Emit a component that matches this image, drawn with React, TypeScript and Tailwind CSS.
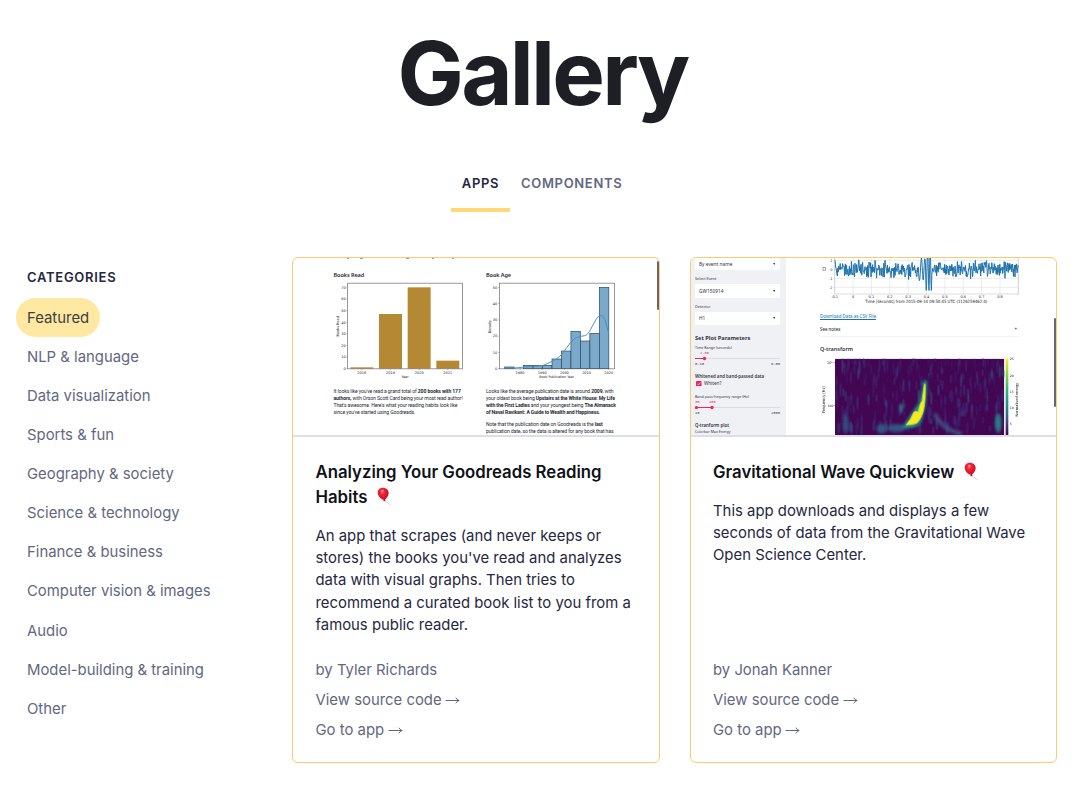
import type { ReactNode } from "react";

const categories = [
  "NLP & language",
  "Data visualization",
  "Sports & fun",
  "Geography & society",
  "Science & technology",
  "Finance & business",
  "Computer vision & images",
  "Audio",
  "Model-building & training",
  "Other",
];

function makeRandom(seed: number) {
  let s = seed;
  return () => {
    s = (s * 16807) % 2147483647;
    return s / 2147483647;
  };
}

function Balloon() {
  return (
    <svg viewBox="0 0 42 54" className="ml-[9.5px] inline-block h-[18px] w-[14px] align-[-2.5px]">
      <defs>
        <radialGradient id="balloon" cx="0.42" cy="0.3" r="0.7">
          <stop offset="0" stopColor="#ff6a70" />
          <stop offset="0.3" stopColor="#ee2436" />
          <stop offset="1" stopColor="#c40a20" />
        </radialGradient>
      </defs>
      <path d="M23 41 C25 47 31 43 33 48 S38 51 41 52" fill="none" stroke="#bdbdbd" strokeWidth="1.8" />
      <path d="M18 2 C28 2 35 9 35 18 C35 28 28 34 24 38 L26 42 L19 43 L20 38 C12 36 3 28 2 17 C2 8 9 2 18 2Z" fill="url(#balloon)" />
      <ellipse cx="16" cy="11" rx="4" ry="3" fill="#ff9a9e" opacity="0.8" />
    </svg>
  );
}

function BooksChart() {
  const bars = [
    [194, 352, "2018"],
    [280, 192, "2019"],
    [366, 112, "2020"],
    [452, 332, "2021"],
  ] as const;
  return (
    <svg viewBox="145 96 390 291" className="block h-[97px] w-[130px]" fontFamily="DejaVu Sans" fontSize="10.500" fill="#222">
      {bars.map(([x, y, label]) => (
        <g key={label}>
          <rect x={x} y={y} width="69" height={356 - y} fill="#b58934" />
          <path d={`M${x + 34.5} 356v4`} stroke="#444" />
          <text x={x + 34.5} y="371" textAnchor="middle">{label}</text>
        </g>
      ))}
      {[0, 10, 20, 30, 40, 50, 60, 70].map((v) => (
        <g key={v}>
          <path d={`M182 ${356 - v * 3.486}h4`} stroke="#444" />
          <text x="180" y={360 - v * 3.486} textAnchor="end">{v}</text>
        </g>
      ))}
      <rect x="186" y="99.500" width="344" height="257" fill="none" stroke="#666" strokeWidth="2" />
      <text x="358" y="385" textAnchor="middle">Year</text>
      <text transform="translate(160 229) rotate(-90)" textAnchor="middle">Books Read</text>
    </svg>
  );
}

function AgeChart() {
  const tops = [351, 356, 346, 346, 346, 327, 303, 244, 273, 250, 112];
  return (
    <svg viewBox="48 96 390 291" className="block h-[97px] w-[130px]" fontFamily="DejaVu Sans" fontSize="10.500" fill="#222">
      {tops.map((y, i) => (
        <rect key={i} x={104 + i * 28.4} y={y} width="28.400" height={356 - y} fill="#7aa9cb" stroke="#24465c" strokeWidth="2" />
      ))}
      <path d="M104 355 C150 355 165 349 189 349 S220 347 240 337 S268 323 285 300 S310 264 328 260 S350 260 362 238 S380 200 391 197 S407 213 416 250" fill="none" stroke="#4b8fbe" strokeWidth="3" />
      {[0, 10, 20, 30, 40, 50].map((v) => (
        <g key={v}>
          <path d={`M84 ${356 - v * 4.88}h4`} stroke="#444" />
          <text x="82" y={360 - v * 4.88} textAnchor="end">{v}</text>
        </g>
      ))}
      {[1980, 1990, 2000, 2010, 2020].map((v, i) => (
        <g key={v}>
          <path d={`M${150 + i * 66.6} 356v4`} stroke="#444" />
          <text x={150 + i * 66.6} y="371" textAnchor="middle">{v}</text>
        </g>
      ))}
      <rect x="88" y="99.500" width="345" height="257" fill="none" stroke="#666" strokeWidth="2" />
      <text x="260" y="385" textAnchor="middle" textLength="104" lengthAdjust="spacingAndGlyphs">Book Publication Year</text>
      <text transform="translate(64 230) rotate(-90)" textAnchor="middle">Density</text>
    </svg>
  );
}

function wavePath() {
  const rnd = makeRandom(77);
  let d = "";
  for (let x = 105; x <= 655; x += 1.2) {
    let y = 58 + (rnd() + rnd() - 1) * 31;
    if (x > 355 && x < 396) {
      const a = x < 375 ? 34 : 64;
      y = 58 + Math.sin((x - 355) * (0.45 + (x - 355) * 0.006)) * a;
    }
    d += `${d ? "L" : "M"}${x.toFixed(1)} ${y.toFixed(1)}`;
  }
  return d;
}

function WaveChart() {
  return (
    <svg viewBox="60 24 600 141" className="block h-[47px] w-[200px]" fontFamily="DejaVu Sans" fill="#222">
      {[0, 1, 2, 3, 4, 5, 6, 7, 8, 9, 10].map((i) => (
        <path key={i} d={`M${104 + i * 55.1} 24V137`} stroke="#d8d8d8" strokeWidth="1.500" />
      ))}
      {[31, 58, 85, 112].map((y, i) => (
        <g key={y}>
          <path d={`M100 ${y}H655`} stroke="#d8d8d8" strokeWidth="1.500" />
          <text x="97" y={y + 4} fontSize="10" textAnchor="end">{1 - i}</text>
        </g>
      ))}
      <path d="M104 24V132H655V24" fill="none" stroke="#bbb" strokeWidth="1.500" />
      <path d={wavePath()} fill="none" stroke="#1b70aa" strokeWidth="2.900" strokeLinejoin="round" />
      {["-0.1", "0", "0.1", "0.2", "0.3", "0.4", "0.5", "0.6", "0.7", "0.8"].map((t, i) => (
        <text key={t} x={104 + i * 55.1} y="145" fontSize="10.500" textAnchor="middle">{t}</text>
      ))}
      <rect x="69" y="53" width="8" height="8" fill="none" stroke="#555" strokeWidth="1.500" />
      <text x="379" y="160" fontSize="13" textAnchor="middle" textLength="366" lengthAdjust="spacingAndGlyphs">Time [seconds] from 2015-09-14 09:50:45 UTC (1126259462.0)</text>
    </svg>
  );
}

function Spectrogram() {
  const rnd = makeRandom(4213);
  const streaks = Array.from({ length: 260 }, () => {
    const y = 325 + Math.pow(rnd(), 1.2) * 215;
    const low = (y - 325) / 215;
    return {
      x: 105 + rnd() * 508,
      y,
      rx: 1.5 + low * 2.5 + rnd() * 1.2,
      ry: 9 + rnd() * 14,
      o: 0.14 + rnd() * 0.34,
      c: rnd() > 0.3 ? "#3f3f85" : "#31688e",
    };
  });
  return (
    <svg viewBox="60 320 600 236" className="block h-[78.67px] w-[200px]" fontFamily="DejaVu Sans" fill="#222">
      <defs>
        <clipPath id="plot"><rect x="105" y="325" width="508" height="231" /></clipPath>
        <filter id="soft"><feGaussianBlur stdDeviation="1.4" /></filter>
        <filter id="softer" x="-50%" y="-50%" width="200%" height="200%"><feGaussianBlur stdDeviation="5" /></filter>
        <linearGradient id="viridis" x1="0" y1="0" x2="0" y2="1">
          <stop offset="0" stopColor="#fde725" />
          <stop offset="0.2" stopColor="#8fd744" />
          <stop offset="0.4" stopColor="#35b779" />
          <stop offset="0.6" stopColor="#21908d" />
          <stop offset="0.8" stopColor="#3b528b" />
          <stop offset="1" stopColor="#440154" />
        </linearGradient>
      </defs>
      <g clipPath="url(#plot)">
        <rect x="105" y="325" width="508" height="231" fill="#430653" />
        <g filter="url(#soft)">
          {streaks.map((s, i) => (
            <ellipse key={i} cx={s.x} cy={s.y} rx={s.rx} ry={s.ry} fill={s.c} opacity={s.o} />
          ))}
        </g>
        <g filter="url(#softer)">
          <ellipse cx="137" cy="520" rx="9" ry="30" fill="#31688e" opacity="0.7" />
          <ellipse cx="595" cy="518" rx="9" ry="30" fill="#21908d" opacity="0.9" />
          <ellipse cx="245" cy="535" rx="16" ry="14" fill="#31688e" opacity="0.8" />
          <ellipse cx="290" cy="533" rx="28" ry="12" fill="#31688e" opacity="0.8" />
          <path d="M404 490 Q428 540 485 550" fill="none" stroke="#3b6a92" strokeWidth="13" opacity="0.7" />
          <ellipse cx="303" cy="473" rx="5" ry="14" fill="#31888e" opacity="0.8" />
          <path d="M312 530 Q338 490 358 462 Q368 440 372 395 L378 395 Q376 480 358 518 Q338 532 312 530Z" fill="#29af7f" stroke="#21908d" strokeWidth="7" />
        </g>
        <g filter="url(#soft)">
          <path d="M318 524 Q334 506 341 486 Q347 480 355 485 Q360 456 366 453 Q370 420 373 400 L376 403 Q377 450 371 480 Q364 506 350 519 Q334 525 318 524Z" fill="#fbe723" stroke="#9bd93c" strokeWidth="2.500" />
        </g>
      </g>
      <rect x="617" y="325" width="8" height="231" fill="url(#viridis)" />
      {[25, 20, 15, 10, 5].map((v, i) => (
        <text key={v} x="629" y={330 + i * 48.8} fontSize="9.500">{v}</text>
      ))}
      <path d="M101 337h4M101 465h4" stroke="#444" strokeWidth="1.500" />
      <text x="98" y="341" fontSize="10" textAnchor="end">10³</text>
      <text x="100" y="469" fontSize="9" textAnchor="end">100</text>
      <text transform="translate(76 448) rotate(-90)" fontSize="12" textAnchor="middle" textLength="80" lengthAdjust="spacingAndGlyphs">Frequency [Hz]</text>
      <text transform="translate(653 448) rotate(-90)" fontSize="11" textAnchor="middle" textLength="101" lengthAdjust="spacingAndGlyphs">Normalised energy</text>
    </svg>
  );
}

function GoodreadsPreview() {
  return (
    <div className="relative flex h-[177px] overflow-hidden pl-[40.500px] font-['Noto_Sans',sans-serif] text-[#262833]">
      <div className="w-[152.500px] shrink-0">
        <div className="flex h-[1px] gap-[11px] pl-[13px]">
          <i className="w-[2px] bg-gray-400" />
          <i className="w-[3px] bg-gray-400" />
          <i className="ml-[32px] w-[3px] bg-gray-400" />
          <i className="ml-[12px] w-[2px] bg-gray-400" />
          <i className="ml-[7px] w-[2px] bg-gray-400" />
        </div>
        <h4 className="mt-[12px] h-[11px] text-[5.6px] leading-[8px] font-semibold tracking-[-0.02em]">Books Read</h4>
        <BooksChart />
        <div className="mt-[9px] font-['Roboto',sans-serif] text-[5.1px] leading-[7.15px] tracking-[-0.022em] whitespace-nowrap">
          <p>It looks like you've read a grand total of <b>200 books with 177</b></p>
          <p><b>authors,</b> with Orson Scott Card being your most read author!</p>
          <p>That's awesome. Here's what your reading habits look like</p>
          <p>since you've started using Goodreads.</p>
        </div>
      </div>
      <div className="shrink-0 pt-[13px]">
        <h4 className="h-[11px] text-[5.6px] leading-[8px] font-semibold tracking-[-0.02em]">Book Age</h4>
        <AgeChart />
        <div className="mt-[9px] font-['Roboto',sans-serif] text-[5.1px] leading-[7.15px] tracking-[-0.024em] whitespace-nowrap">
          <p>Looks like the average publication date is around <b>2009</b>, with</p>
          <p>your oldest book being <b>Upstairs at the White House: My Life</b></p>
          <p><b>with the First Ladies</b> and your youngest being <b>The Almanack</b></p>
          <p><b>of Naval Ravikant: A Guide to Wealth and Happiness.</b></p>
          <p className="mt-[4.500px]">Note that the publication date on Goodreads is the <b>last</b></p>
          <p>publication date, so the data is altered for any book that has</p>
        </div>
      </div>
      <div className="absolute top-[3px] right-0 h-[49px] w-[2px] rounded-full bg-[#6b6668]" />
    </div>
  );
}

function Select({ children, className }: { children: ReactNode; className: string }) {
  return (
    <div className={`flex items-center justify-between rounded-[1px] bg-white pr-[5px] pl-[4px] text-[4.8px] leading-none ${className}`}>
      <span>{children}</span>
      <svg viewBox="0 0 4 3" className="h-[2px] w-[2.500px]"><path d="M0 0h4L2 3z" fill="#444" /></svg>
    </div>
  );
}

function Range({ from, to }: { from: number; to: number }) {
  return (
    <svg viewBox="0 0 85 5" className="block h-[5px] w-[85px]">
      <path d="M0 2.500H85" stroke="#d9dbe2" strokeWidth="1" />
      <path d={`M${from} 2.500H${to}`} stroke="#f0245a" strokeWidth="1.200" />
      {from > 0 && <circle cx={from} cy="2.500" r="1.600" fill="#f0245a" />}
      <circle cx={to} cy="2.500" r="1.700" fill="#f0245a" />
    </svg>
  );
}

function WavePreview() {
  return (
    <div className="relative flex h-[177px] overflow-hidden font-['Noto_Sans',sans-serif] text-[#31333f]">
      <div className="h-full w-[95.500px] shrink-0 overflow-hidden bg-[#eff1f5] pl-[4.500px] whitespace-nowrap">
        <div className="w-[85px]">
          <Select className="h-[12px]">By event name</Select>
          <p className="h-[14px] pt-[4px] text-[3.8px] leading-[10px]">Select Event</p>
          <Select className="h-[14px]">GW150914</Select>
          <p className="h-[13.500px] pt-[4px] text-[3.8px] leading-[10px]">Detector</p>
          <Select className="h-[13.500px]">H1</Select>
          <h5 className="h-[20px] pt-[6px] text-[5.6px] leading-[14px] font-bold">Set Plot Parameters</h5>
          <p className="h-[6px] text-[3.6px] leading-[6px]">Time Range (seconds)</p>
          <p className="h-[5px] pl-[5px] font-['Liberation_Mono',monospace] text-[3.8px] leading-[5px] text-[#f0245a]">1.00</p>
          <Range from={0} to={9.5} />
          <p className="flex h-[6px] justify-between font-['Liberation_Mono',monospace] text-[3.8px] leading-[6px]"><span>0.10</span><span>8.00</span></p>
          <h6 className="mt-[5px] h-[8px] text-[4.4px] leading-[8px] font-semibold">Whitened and band-passed data</h6>
          <div className="flex h-[7px] items-center gap-[2.500px] pl-[1px] text-[4.6px] leading-[7px]">
            <svg viewBox="0 0 6 6" className="size-[5.500px]">
              <rect width="6" height="6" rx="1" fill="#f0245a" />
              <path d="M1.500 3 2.600 4.200 4.600 1.900" fill="none" stroke="white" strokeWidth=".8" />
            </svg>
            <span>Whiten?</span>
          </div>
          <p className="mt-[7px] h-[6px] text-[3.6px] leading-[6px]">Band-pass frequency range (Hz)</p>
          <p className="flex h-[4.500px] gap-[9.500px] font-['Liberation_Mono',monospace] text-[3.8px] leading-[4.500px] text-[#f0245a]"><span>30</span><span>400</span></p>
          <Range from={1.5} to={17} />
          <p className="flex h-[6px] justify-between font-['Liberation_Mono',monospace] text-[3.8px] leading-[6px]"><span>10</span><span>2000</span></p>
          <h6 className="mt-[5.500px] h-[8px] text-[4.4px] leading-[8px] font-semibold">Q-tranform plot</h6>
          <p className="text-[3.600px] leading-[6px]">Colorbar Max Energy</p>
        </div>
      </div>
      <div className="ml-[34px] w-[200px] shrink-0">
        <WaveChart />
        <p className="mt-[7px] h-[9px] text-[4.5px] leading-[9px] text-[#1673b1] underline">Download Data as CSV File</p>
        <div className="flex h-[15.500px] items-center justify-between border-b-[1px] border-gray-100 pt-[5px] pr-[3px] pb-[2px] text-[4.400px] font-medium">
          <span>See notes</span>
          <span>+</span>
        </div>
        <h5 className="h-[20px] pt-[6px] text-[5.5px] leading-[12px] font-semibold">Q-transform</h5>
        <Spectrogram />
      </div>
      <div className="absolute top-[60px] right-0 h-[89px] w-[2px] rounded-full bg-[#6b6668]" />
    </div>
  );
}

function Arrow() {
  return (
    <svg viewBox="0 0 15 8" className="-ml-[0.5px] inline-block h-[8px] w-[15px] align-[1px]" fill="none" stroke="currentColor" strokeWidth="1">
      <path d="M0.500 4.500H13.800M10.800 1.700Q11.800 3.800 14.200 4.500Q11.800 5.200 10.800 7.300" />
    </svg>
  );
}

function Card({ preview, title, text, author }: { preview: ReactNode; title: ReactNode; text: ReactNode; author: string }) {
  return (
    <article className="flex h-[506px] w-[367.5px] flex-col overflow-hidden rounded-[6px] border border-[#fdcb6e] bg-white">
      <div className="border-b-2 border-[#dcdeea]">{preview}</div>
      <div className="flex flex-1 flex-col pt-[22.500px] pr-4 pb-[17px] pl-[22.500px]">
        <h2 className="text-[16.75px] leading-[25px] font-semibold whitespace-nowrap text-[#0e1117]">{title}</h2>
        <div className="mt-[15px] text-[14.88px] leading-[22.35px] whitespace-nowrap text-[#262740]">{text}</div>
        <div className="mt-auto text-[14.88px] leading-[30px] text-[#626880]">
          <p>by {author}</p>
          <p><a href="#source">View source code <Arrow /></a></p>
          <p><a href="#app">Go to app <Arrow /></a></p>
        </div>
      </div>
    </article>
  );
}

export default function App() {
  return (
    <div className="h-[785px] w-[1080px] overflow-hidden bg-white font-['Inter',sans-serif]">
      <h1 className="pt-[19px] pl-[5px] text-center text-[88.5px] leading-[107px] font-bold tracking-[-0.031em] text-[#1e1e25]">Gallery</h1>
      <nav className="mt-[38px] flex h-[48px] pl-[451px] text-[13px] leading-[39px] font-semibold tracking-[0.052em]">
        <a href="#apps" className="w-[59px] border-b-4 border-[#ffd976] text-center text-[#262740]">APPS</a>
        <a href="#components" className="pl-[11px] text-[#626880]">COMPONENTS</a>
      </nav>
      <div className="mt-[45px] flex">
        <aside className="w-[292px] shrink-0 pl-[27px] text-[14.88px] text-[#626880]">
          <h3 className="h-[41px] text-[13px] leading-[40px] font-semibold tracking-[0.055em] text-[#262740]">CATEGORIES</h3>
          <a href="#featured" className="-ml-[11px] inline-block h-[39px] rounded-full bg-[#ffe8a1] px-[11px] leading-[40px] text-[#3f4045]">Featured</a>
          <ul className="pt-[0.6px]">
            {categories.map((c) => (
              <li key={c} className="h-[39.15px] leading-[39.15px]">{c}</li>
            ))}
          </ul>
        </aside>
        <main className="flex gap-[30px]">
          <Card
            preview={<GoodreadsPreview />}
            title={<>Analyzing Your Goodreads Reading<br />Habits<Balloon /></>}
            text={<>An app that scrapes (and never keeps or<br />stores) the books you've read and analyzes<br />data with visual graphs. Then tries to<br />recommend a curated book list to you from a<br />famous public reader.</>}
            author="Tyler Richards"
          />
          <Card
            preview={<WavePreview />}
            title={<>Gravitational Wave Quickview<Balloon /></>}
            text={<>This app downloads and displays a few<br />seconds of data from the Gravitational Wave<br />Open Science Center.</>}
            author="Jonah Kanner"
          />
        </main>
      </div>
    </div>
  );
}
